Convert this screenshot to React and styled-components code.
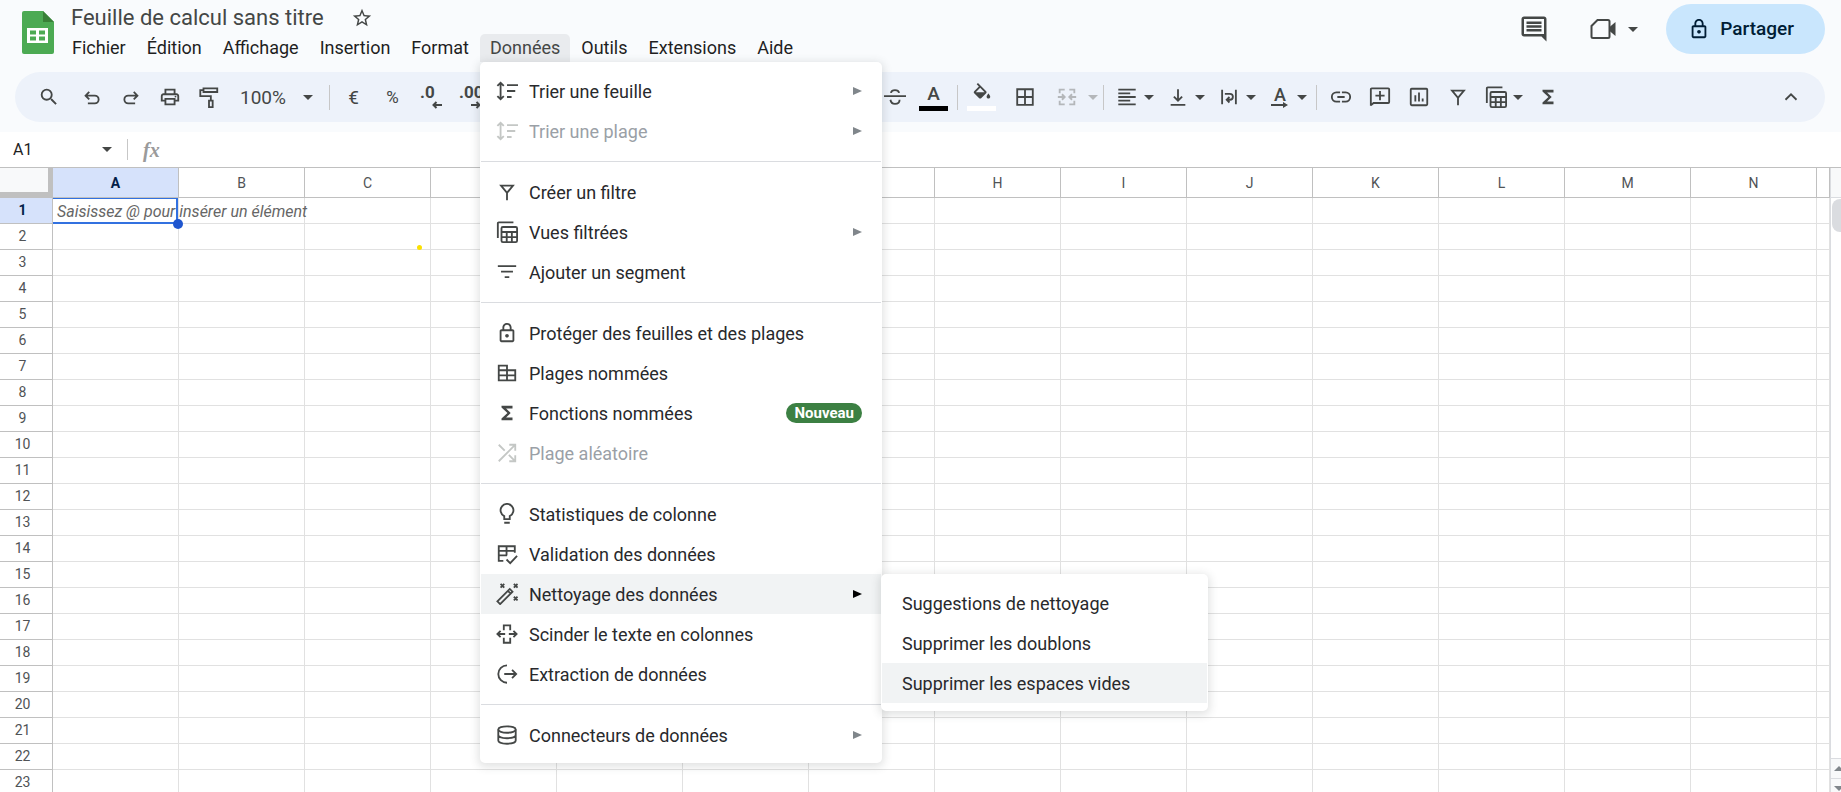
import React from 'react'
import styled, { createGlobalStyle, css } from 'styled-components'

const COLUMNS = 'ABCDEFGHIJKLMN'.split('')
const ROWS = Array.from({ length: 23 }, (_, i) => i + 1)

/* icons */

const Svg = ({ size = 24, children }) => (
    <svg width={ size } height={ size } viewBox="0 0 24 24" fill="currentColor" aria-hidden="true">
        { children }
    </svg>
)

const Stroke = ({ size = 24, width = 2, children }) => (
    <svg
        width={ size }
        height={ size }
        viewBox="0 0 24 24"
        fill="none"
        stroke="currentColor"
        strokeWidth={ width }
        aria-hidden="true"
    >
        { children }
    </svg>
)

const SheetsLogo = () => (
    <svg width="32" height="43" viewBox="0 0 32 43" aria-hidden="true">
        <path fill="#4caa53" d="M2 0h19l11 11v30a2 2 0 0 1-2 2H2a2 2 0 0 1-2-2V2a2 2 0 0 1 2-2z" />
        <path fill="#398038" d="M21 0l11 11H21z" />
        <path
            fill="#fff"
            fillRule="evenodd"
            d="M5 17h21v15H5zM8 19.500v4h6v-4zM17 19.500v4h6v-4zM8 25.500v4h6v-4zM17 25.500v4h6v-4z"
        />
    </svg>
)

const StarIcon = () => (
    <Svg size={ 22 }>
        <path d="M22 9.240l-7.190-.62L12 2 9.190 8.630 2 9.240l5.460 4.730L5.820 21 12 17.270 18.180 21l-1.630-7.030L22 9.240zM12 15.400l-3.760 2.270 1-4.280-3.320-2.880 4.380-.38L12 6.100l1.710 4.040 4.380.38-3.320 2.880 1 4.280L12 15.400z" />
    </Svg>
)

const CommentIcon = () => (
    <Svg size={ 30 }>
        <path d="M21.990 4c0-1.100-.89-2-1.990-2H4c-1.100 0-2 .9-2 2v12c0 1.100.9 2 2 2h14l4 4-.01-18zM20 4v12H4V4h16zM6 12h12v2H6zm0-3h12v2H6zm0-3h12v2H6z" />
    </Svg>
)

const MeetIcon = () => (
    <svg width="26" height="22" viewBox="0 0 26 22" aria-hidden="true">
        <path fill="none" stroke="currentColor" strokeWidth="2" d="M7.500 2H18a1.500 1.500 0 0 1 1.500 1.500v15A1.500 1.500 0 0 1 18 20H3a1.500 1.500 0 0 1-1.500-1.500V8z" />
        <path fill="currentColor" d="M19 9.500L25.500 4v14L19 12.500z" />
    </svg>
)

const LockIcon = ({ size = 24 }) => (
    <Svg size={ size }>
        <path d="M18 8h-1V6c0-2.760-2.240-5-5-5S7 3.240 7 6v2H6c-1.100 0-2 .9-2 2v10c0 1.100.9 2 2 2h12c1.100 0 2-.9 2-2V10c0-1.100-.9-2-2-2zM9 6c0-1.660 1.340-3 3-3s3 1.340 3 3v2H9V6zm9 14H6V10h12v10zm-6-3c1.100 0 2-.9 2-2s-.9-2-2-2-2 .9-2 2 .9 2 2 2z" />
    </Svg>
)

const SearchIcon = () => (
    <Svg>
        <path d="M15.500 14h-.79l-.28-.27A6.471 6.471 0 0 0 16 9.500 6.500 6.500 0 1 0 9.500 16c1.610 0 3.090-.59 4.230-1.570l.27.28v.79l5 4.990L20.490 19l-4.990-5zm-6 0C7.010 14 5 11.990 5 9.500S7.010 5 9.500 5 14 7.010 14 9.500 11.990 14 9.500 14z" />
    </Svg>
)

const UndoIcon = () => (
    <Stroke>
        <path d="M9 6.500L5 10.500l4 4M5.500 10.500H15a4 4 0 0 1 0 8.500H7.500" />
    </Stroke>
)

const RedoIcon = () => (
    <Stroke>
        <path d="M15 6.500l4 4-4 4M18.500 10.500H9A4 4 0 0 0 9 19h7.500" />
    </Stroke>
)

const PrintIcon = () => (
    <Svg>
        <path d="M19 8h-1V3H6v5H5c-1.660 0-3 1.340-3 3v6h4v4h12v-4h4v-6c0-1.660-1.340-3-3-3zM8 5h8v3H8V5zm8 12v2H8v-4h8v2zm2-2v-2H6v2H4v-4c0-.55.45-1 1-1h14c.55 0 1 .45 1 1v4h-2z" />
        <circle cx="18" cy="11.500" r="1" />
    </Svg>
)

const PaintIcon = () => (
    <Stroke>
        <path d="M6 2.500h15v4H6zM6 4.500H2.500V11H14v5M12 16h4v7h-4z" />
    </Stroke>
)

const ArrowLeftSmall = () => (
    <svg width="10" height="8" viewBox="0 0 10 8" aria-hidden="true">
        <path fill="none" stroke="currentColor" strokeWidth="2" d="M10 4H1.500M4.500 1l-3 3 3 3" />
    </svg>
)

const ArrowRightSmall = () => (
    <svg width="10" height="8" viewBox="0 0 10 8" aria-hidden="true">
        <path fill="none" stroke="currentColor" strokeWidth="2" d="M0 4h8.500M5.500 1l3 3-3 3" />
    </svg>
)

const StrikeIcon = () => (
    <Stroke>
        <path d="M0 11h24M7.500 7.500C8 5.500 9.500 4.500 12 4.500s4 1 4.500 3M7 15c.5 3 2 4.500 5 4.500s5-1.500 5-4.500" />
    </Stroke>
)

const FillIcon = () => (
    <svg width="24" height="24" viewBox="0 0 24 24" fill="currentColor" aria-hidden="true">
        <path d="M16.560 8.940L7.620 0 6.210 1.410l2.380 2.380-5.150 5.150a1.490 1.490 0 0 0 0 2.120l5.500 5.500c.29.290.68.440 1.060.44s.77-.15 1.060-.44l5.500-5.500c.59-.58.59-1.530 0-2.120zM5.210 10L10 5.210 14.790 10H5.210zM19 11.500s-2 2.170-2 3.500c0 1.100.9 2 2 2s2-.9 2-2c0-1.330-2-3.500-2-3.500z" />
    </svg>
)

const BordersIcon = () => (
    <Stroke>
        <path d="M3.500 3.500h17v17h-17zM12 3.500v17M3.500 12h17" />
    </Stroke>
)

const MergeIcon = () => (
    <Stroke>
        <path d="M9.500 4H4v4M4 16v4h5.500M14.500 4H20v4M20 16v4h-5.500M2 12h7M6.500 9l3 3-3 3M22 12h-7M17.500 9l-3 3 3 3" />
    </Stroke>
)

const AlignIcon = () => (
    <Stroke>
        <path d="M2.500 4h19M2.500 8h13M2.500 12h19M2.500 16h13M2.500 20h19" />
    </Stroke>
)

const BottomIcon = () => (
    <Stroke>
        <path d="M4 20.500h16M12 3.500v12M7.500 11.500L12 16l4.500-4.500" />
    </Stroke>
)

const WrapIcon = () => (
    <Stroke>
        <path d="M4.500 4v16M19.500 4v16M7.500 8.500h5.500a3.200 3.200 0 0 1 0 6.500H9.500M12.500 12l-3 3 3 3" />
    </Stroke>
)

const LinkIcon = () => (
    <Stroke>
        <path d="M11 7H7a5 5 0 0 0 0 10h4M13 7h4a5 5 0 0 1 0 10h-4M8 12h8" />
    </Stroke>
)

const AddCommentIcon = () => (
    <Stroke>
        <path d="M2 21.500V3.500a1 1 0 0 1 1-1h18a1 1 0 0 1 1 1v14a1 1 0 0 1-1 1H5L2 21M12 5.500v10M7 10.500h10" />
    </Stroke>
)

const ChartIcon = () => (
    <Stroke>
        <rect x="3" y="3" width="18" height="18" rx="1" />
        <path d="M8 10v7M12 7v10M16 13.500V17" />
    </Stroke>
)

const FilterIcon = () => (
    <Stroke>
        <path d="M5.500 5h13L12 13zM12 12.500v8.500" />
    </Stroke>
)

const ViewsIcon = () => (
    <Stroke>
        <path d="M2 18.500V2.500a1 1 0 0 1 1-1h16" />
        <rect x="6" y="6.500" width="17" height="16.500" rx="1.500" />
        <path d="M6 12h17M6 17.500h17M11.700 12v11M17.300 12v11" />
    </Stroke>
)

const SigmaIcon = () => (
    <Svg>
        <path d="M18 4H6v2l6.500 6L6 18v2h12v-3h-7l5-5-5-5h7z" />
    </Svg>
)

const ChevronUpIcon = () => (
    <Stroke>
        <path d="M6 15l6-6 6 6" />
    </Stroke>
)

const BoldIcon = () => (
    <Stroke width={ 3 }>
        <path d="M8 5h5a3 3 0 0 1 0 7H8zM8 12h6a3 3 0 0 1 0 7H8z" />
    </Stroke>
)

const ItalicIcon = () => (
    <Stroke>
        <path d="M10 5h8M6 19h8M14 5l-4 14" />
    </Stroke>
)

const MinusIcon = () => (
    <Stroke>
        <path d="M6 12h12" />
    </Stroke>
)

const PlusIcon = () => (
    <Stroke>
        <path d="M6 12h12M12 6v12" />
    </Stroke>
)

const SortIcon = () => (
    <Stroke>
        <path d="M5 3v18M1.500 6.500L5 3l3.500 3.500M1.500 17.500L5 21l3.500-3.500M12 5.500h12M12 12h9M12 18.500h5" />
    </Stroke>
)

const SegmentIcon = () => (
    <Stroke>
        <path d="M2 5.500h20M5.500 11.500h13M9.500 17.500h5" />
    </Stroke>
)

const NamedRangeIcon = () => (
    <Stroke>
        <path d="M3 4h9v16H3zM12 9h9v11h-9M3 9h9M3 14.500h18" />
    </Stroke>
)

const ShuffleIcon = () => (
    <Stroke>
        <path d="M3 21L20.500 3.500M3 3l6.500 6.500M14 14l6.500 6.500M14.500 3H21v6.500M14.500 21H21v-6.500" />
    </Stroke>
)

const BulbIcon = () => (
    <Stroke>
        <path d="M9 17.500v-3.200a7 7 0 1 1 6 0v3.200zM9 21.500h6" />
    </Stroke>
)

const ValidationIcon = () => (
    <Stroke>
        <path d="M8 19.500H3V3.500h17.500v7M3 8.500h17.500M3 13.500h9M11.500 3.500v10M11.500 18l4 4 7.500-8" />
    </Stroke>
)

const WandIcon = () => (
    <Stroke>
        <path d="M1.500 20L15 6.500l3 3L4.500 23zM13 8.500l3 3M5 1l4 4M9 1L5 5M19.500 1l4 4M23.500 1l-4 4M19.500 15l4 4M23.500 15l-4 4" />
    </Stroke>
)

const SplitIcon = () => (
    <Stroke>
        <path d="M8.500 8V2.500h7V8M8.500 16v5.500h7V16M10 12H1.500M5 8.500L1.500 12 5 15.500M14 12h8.500M19 8.500l3.500 3.500-3.500 3.500" />
    </Stroke>
)

const ExtractIcon = () => (
    <Stroke>
        <path d="M12 2.500a9.500 9.500 0 0 0 0 19M9 12h13M17.500 7.500L22 12l-4.500 4.500" />
    </Stroke>
)

const DatabaseIcon = () => (
    <Stroke>
        <ellipse cx="12" cy="6" rx="9.500" ry="3.500" />
        <path d="M2.500 6v12c0 2 4 3.500 9.500 3.500s9.500-1.500 9.500-3.500V6M2.500 12c0 2 4 3.500 9.500 3.500s9.500-1.500 9.500-3.500" />
    </Stroke>
)

const Caret = () => (
    <svg width="10" height="5" viewBox="0 0 10 5" fill="currentColor" aria-hidden="true">
        <path d="M0 0h10L5 5z" />
    </svg>
)

const SubmenuArrow = () => (
    <svg width="9" height="8" viewBox="0 0 9 8" fill="currentColor" aria-hidden="true">
        <path d="M0 0l9 4-9 4z" />
    </svg>
)

/* data */

const MENUS = ['Fichier', 'Édition', 'Affichage', 'Insertion', 'Format', 'Données', 'Outils', 'Extensions', 'Aide']

const DATA_MENU = [
    [
        { label: 'Trier une feuille', icon: <SortIcon />, arrow: true },
        { label: 'Trier une plage', icon: <SortIcon />, arrow: true, disabled: true },
    ],
    [
        { label: 'Créer un filtre', icon: <FilterIcon /> },
        { label: 'Vues filtrées', icon: <ViewsIcon />, arrow: true },
        { label: 'Ajouter un segment', icon: <SegmentIcon /> },
    ],
    [
        { label: 'Protéger des feuilles et des plages', icon: <LockIcon /> },
        { label: 'Plages nommées', icon: <NamedRangeIcon /> },
        { label: 'Fonctions nommées', icon: <SigmaIcon />, badge: 'Nouveau' },
        { label: 'Plage aléatoire', icon: <ShuffleIcon />, disabled: true },
    ],
    [
        { label: 'Statistiques de colonne', icon: <BulbIcon /> },
        { label: 'Validation des données', icon: <ValidationIcon /> },
        {
            label: 'Nettoyage des données',
            icon: <WandIcon />,
            arrow: true,
            items: ['Suggestions de nettoyage', 'Supprimer les doublons', 'Supprimer les espaces vides'],
        },
        { label: 'Scinder le texte en colonnes', icon: <SplitIcon /> },
        { label: 'Extraction de données', icon: <ExtractIcon /> },
    ],
    [
        { label: 'Connecteurs de données', icon: <DatabaseIcon />, arrow: true },
    ],
]

/* components */

const DataMenu = () => (
    <Menu>
        { DATA_MENU.map((group, i) => (
            <MenuGroup key={ i }>
                { group.map(({ label, icon, arrow, badge, disabled, items }) => (
                    <MenuRow key={ label }>
                        <MenuItem disabled={ disabled } $active={ !!items }>
                            <MenuIcon>{ icon }</MenuIcon>
                            <MenuLabel>{ label }</MenuLabel>
                            { badge && <Badge>{ badge }</Badge> }
                            { arrow && <MenuArrow $active={ !!items }><SubmenuArrow /></MenuArrow> }
                        </MenuItem>
                        { items && (
                            <Submenu>
                                { items.map(item => (
                                    <SubmenuItem key={ item } $active={ item === 'Supprimer les espaces vides' }>
                                        { item }
                                    </SubmenuItem>
                                )) }
                            </Submenu>
                        ) }
                    </MenuRow>
                )) }
            </MenuGroup>
        )) }
    </Menu>
)

const Tool = ({ label, children, ...props }) => (
    <ToolButton aria-label={ label } { ...props }>{ children }</ToolButton>
)

const ComboTool = ({ label, children, ...props }) => (
    <ComboButton aria-label={ label } { ...props }>
        { children }
        <Caret />
    </ComboButton>
)

const SheetToolbar = () => (
    <Toolbar>
        <ToolGroup>
            <Tool label="Rechercher"><SearchIcon /></Tool>
        </ToolGroup>
        <ToolGroup>
            <Tool label="Annuler"><UndoIcon /></Tool>
            <Tool label="Rétablir"><RedoIcon /></Tool>
            <Tool label="Imprimer"><PrintIcon /></Tool>
            <Tool label="Copier la mise en forme"><PaintIcon /></Tool>
            <ZoomButton>100% <Caret /></ZoomButton>
        </ToolGroup>
        <Divider />
        <Tool label="Format monétaire">€</Tool>
        <Tool label="Format en pourcentage"><Percent>%</Percent></Tool>
        <DecimalButton>.0<ArrowLeftSmall /></DecimalButton>
        <DecimalButton>.00<ArrowRightSmall /></DecimalButton>
        <ComboTool label="Autres formats"><MinusIcon /></ComboTool>
        <Divider />
        <FontButton aria-label="Police"><Caret /></FontButton>
        <Divider />
        <Tool label="Réduire la taille"><MinusIcon /></Tool>
        <Tool label="Taille de la police"><Caret /></Tool>
        <Tool label="Augmenter la taille"><PlusIcon /></Tool>
        <Divider />
        <Tool label="Gras"><BoldIcon /></Tool>
        <Tool label="Italique"><ItalicIcon /></Tool>
        <Tool label="Barré"><StrikeIcon /></Tool>
        <ColorButton aria-label="Couleur du texte"><ColorLetter>A</ColorLetter><Swatch $color="#000" /></ColorButton>
        <Divider />
        <ToolGroup>
            <ColorButton aria-label="Couleur de remplissage"><FillIcon /><Swatch $color="#fff" /></ColorButton>
        </ToolGroup>
        <ToolGroup>
            <Tool label="Bordures"><BordersIcon /></Tool>
        </ToolGroup>
        <ComboTool label="Fusionner les cellules" disabled $gap={ 10 }><MergeIcon /></ComboTool>
        <Divider />
        <ComboTool label="Alignement horizontal"><AlignIcon /></ComboTool>
        <ComboTool label="Alignement vertical"><BottomIcon /></ComboTool>
        <ComboTool label="Retour à la ligne"><WrapIcon /></ComboTool>
        <ComboTool label="Rotation du texte">
            <RotateGlyph>A<svg width="18" height="6" viewBox="0 0 18 6" aria-hidden="true">
                <path fill="currentColor" d="M0 2h12V0l5 3-5 3V4H0z" />
            </svg></RotateGlyph>
        </ComboTool>
        <Divider />
        <Tool label="Insérer un lien"><LinkIcon /></Tool>
        <Tool label="Insérer un commentaire"><AddCommentIcon /></Tool>
        <Tool label="Insérer un graphique"><ChartIcon /></Tool>
        <Tool label="Créer un filtre"><FilterIcon /></Tool>
        <ComboTool label="Vues filtrées"><ViewsIcon /></ComboTool>
        <Tool label="Fonctions"><SigmaIcon /></Tool>
        <CollapseButton aria-label="Masquer les menus"><ChevronUpIcon /></CollapseButton>
    </Toolbar>
)

const Grid = () => (
    <Table>
        <colgroup>
            <RowHeadCol />
            { COLUMNS.map(c => <DataCol key={ c } />) }
            <col />
        </colgroup>
        <thead>
            <tr>
                <Corner />
                { COLUMNS.map(c => <ColumnHead key={ c } $selected={ c === 'A' }>{ c }</ColumnHead>) }
                <ColumnHead />
            </tr>
        </thead>
        <tbody>
            { ROWS.map(r => (
                <tr key={ r }>
                    <RowHead $selected={ r === 1 }>{ r }</RowHead>
                    { COLUMNS.map(c => (
                        <Cell key={ c }>
                            { r === 1 && c === 'A' && (
                                <ActiveCell>
                                    Saisissez @ pour insérer un élément
                                    <FillHandle />
                                </ActiveCell>
                            ) }
                            { r === 2 && c === 'C' && <Marker /> }
                        </Cell>
                    )) }
                    <Cell />
                </tr>
            )) }
        </tbody>
    </Table>
)

const App = () => (
    <Page>
        <GlobalStyle />
        <Header>
            <TitleBar>
                <SheetsLogo />
                <TitleColumn>
                    <TitleRow>
                        <Title>Feuille de calcul sans titre</Title>
                        <IconButton aria-label="Ajouter aux favoris"><StarIcon /></IconButton>
                    </TitleRow>
                    <MenuBar>
                        { MENUS.map(name => (
                            <MenuBarItem key={ name }>
                                <MenuBarButton $open={ name === 'Données' }>{ name }</MenuBarButton>
                                { name === 'Données' && <DataMenu /> }
                            </MenuBarItem>
                        )) }
                    </MenuBar>
                </TitleColumn>
                <Actions>
                    <IconButton aria-label="Commentaires"><CommentIcon /></IconButton>
                    <MeetButton aria-label="Appel vidéo"><MeetIcon /><Caret /></MeetButton>
                    <ShareButton><LockIcon size={ 22 } />Partager</ShareButton>
                </Actions>
            </TitleBar>
            <SheetToolbar />
        </Header>
        <FormulaBar>
            <NameBox aria-label="Zone de nom" defaultValue="A1" />
            <IconButton aria-label="Plages nommées"><Caret /></IconButton>
            <FormulaDivider />
            <Fx>fx</Fx>
            <FormulaInput aria-label="Barre de formule" />
        </FormulaBar>
        <Sheet>
            <GridArea><Grid /></GridArea>
            <Scrollbar>
                <ScrollTop />
                <Thumb />
                <ScrollButtons>
                    <ScrollButton aria-label="Défiler vers le haut"><UpTriangle><Caret /></UpTriangle></ScrollButton>
                    <ScrollButton aria-label="Défiler vers le bas"><Caret /></ScrollButton>
                </ScrollButtons>
            </Scrollbar>
        </Sheet>
    </Page>
)

export default App

/* styles */

const GlobalStyle = createGlobalStyle`
    *, *::before, *::after {
        box-sizing: border-box;
    }

    body {
        margin: 0;
        background: #fff;
        color: #444746;
        font-family: Roboto, "Liberation Sans", sans-serif;
    }

    button, input {
        margin: 0;
        padding: 0;
        border: 0;
        background: none;
        color: inherit;
        font: inherit;
    }

    svg {
        display: block;
        flex: none;
    }
`

const Page = styled.div`
    display: flex;
    flex-direction: column;
    height: 100vh;
    overflow: hidden;
`

const Header = styled.header`
    flex: none;
    padding: 4px 16px 10px 15px;
    background: #f9fbfd;
`

const TitleBar = styled.div`
    display: flex;
    align-items: flex-start;
    margin-bottom: 10px;

    > svg {
        margin: 7px 0 0 7px;
    }
`

const TitleColumn = styled.div`
    flex: 1;
    padding-left: 8px;
`

const TitleRow = styled.div`
    display: flex;
    align-items: center;
    gap: 27px;
    height: 30px;
    padding-bottom: 2px;
`

const Title = styled.h1`
    margin: 0 0 0 9px;
    font-size: 22px;
    font-weight: 400;
    line-height: 28px;
`

const IconButton = styled.button`
    display: flex;
    align-items: center;
`

const MenuBar = styled.nav`
    display: flex;
    gap: 1px;
`

const MenuBarItem = styled.div`
    position: relative;
`

const MenuBarButton = styled.button`
    height: 28px;
    padding: 0 10px;
    border-radius: 5px 5px 0 0;
    color: ${p => (p.$open ? '#444746' : '#1f1f1f')};
    background: ${p => (p.$open ? '#e9ebee' : 'transparent')};
    font-size: 18px;
    line-height: 28px;
`

const popup = css`
    position: absolute;
    z-index: 2;
    padding: 9px 1px 8px;
    border-radius: 5px;
    background: #fff;
    box-shadow: 0 2px 8px 2px rgba(60, 64, 67, .15);
`

const Menu = styled.div`
    ${popup}
    top: 100%;
    left: 0;
    width: 402px;
`

const MenuGroup = styled.div`
    & + & {
        margin-top: 10px;
        padding-top: 10px;
        border-top: 1px solid #dadce0;
    }
`

const MenuRow = styled.div`
    position: relative;
`

const MenuItem = styled.button`
    display: flex;
    align-items: center;
    width: 100%;
    height: 40px;
    padding: 0 19px 0 15px;
    background: ${p => (p.$active ? '#f1f3f4' : 'transparent')};
    color: #28292c;
    font-size: 18px;
    text-align: left;

    &:disabled {
        color: #9aa0a6;
    }
`

const MenuIcon = styled.span`
    width: 22px;
    margin-right: 11px;
    color: #444746;

    svg {
        width: 22px;
        height: 22px;
    }

    ${MenuItem}:disabled & {
        color: #c4c7c5;
    }
`

const MenuLabel = styled.span`
    flex: 1;
`

const MenuArrow = styled.span`
    color: ${p => (p.$active ? '#000' : '#80868b')};
`

const Badge = styled.span`
    padding: 0 8px;
    border-radius: 10px;
    background: #3c8043;
    color: #fff;
    font-size: 15px;
    font-weight: 700;
    line-height: 20px;
`

const Submenu = styled.div`
    ${popup}
    top: 0;
    left: 100%;
    width: 327px;
`

const SubmenuItem = styled.button`
    display: block;
    width: 100%;
    height: 40px;
    padding: 0 20px;
    background: ${p => (p.$active ? '#f1f3f4' : 'transparent')};
    color: #28292c;
    font-size: 18px;
    text-align: left;
`

const Actions = styled.div`
    display: flex;
    align-items: center;
    height: 50px;
`

const MeetButton = styled.button`
    display: flex;
    align-items: center;
    gap: 12px;
    margin: 0 28px 0 41px;
`

const ShareButton = styled.button`
    display: flex;
    align-items: center;
    gap: 10px;
    height: 50px;
    padding: 0 31px 0 22px;
    border-radius: 25px;
    background: #c9e6fd;
    color: #001d35;
    font-size: 19px;
    font-weight: 500;
    line-height: 22px;
`

const Toolbar = styled.div`
    display: flex;
    align-items: center;
    height: 50px;
    padding: 0 15px 0 14px;
    border-radius: 25px;
    background: #edf2fa;
    overflow: hidden;
`

const ToolGroup = styled.div`
    display: flex;
    flex: none;
    margin-right: 4px;

    &:has(+ span) {
        margin-right: 0;
    }
`

const ToolButton = styled.button`
    display: flex;
    flex: none;
    align-items: center;
    justify-content: center;
    width: 39px;
    height: 38px;
    font-size: 19px;

    > svg {
        width: 22px;
        height: 22px;
    }

    > svg[width="10"] {
        width: 10px;
        height: 5px;
    }
`

const Percent = styled.span`
    font-size: 17px;
`

const ComboButton = styled.button`
    display: flex;
    flex: none;
    align-items: center;
    gap: ${p => p.$gap || 6}px;
    width: 51px;
    height: 38px;
    padding-left: 8px;

    > svg:first-child {
        width: 22px;
        height: 22px;
    }

    &:disabled {
        color: #b4b7ba;
    }
`

const ZoomButton = styled.button`
    display: flex;
    align-items: center;
    justify-content: space-between;
    width: 97px;
    height: 38px;
    padding: 0 12px;
    font-size: 19px;
`

const DecimalButton = styled.button`
    display: flex;
    flex: none;
    flex-direction: column;
    align-items: flex-start;
    width: 39px;
    height: 38px;
    padding: 6px 0 0 8px;
    font-size: 17px;
    font-weight: 700;
    line-height: 17px;

    svg {
        margin-left: 12px;
    }
`

const FontButton = styled.button`
    display: flex;
    flex: none;
    align-items: center;
    justify-content: flex-end;
    width: 112px;
    height: 38px;
`

const ColorButton = styled.button`
    display: flex;
    flex: none;
    flex-direction: column;
    align-items: center;
    justify-content: space-between;
    width: 39px;
    height: 28px;

    svg {
        width: 22px;
        height: 22px;
    }
`

const ColorLetter = styled.span`
    font-size: 19px;
    font-weight: 500;
    line-height: 22px;
`

const Swatch = styled.span`
    flex: none;
    width: 29px;
    height: 5px;
    background: ${p => p.$color};
`

const RotateGlyph = styled.span`
    display: flex;
    flex-direction: column;
    align-items: center;
    width: 22px;
    font-size: 18px;
    font-weight: 500;
    line-height: 15px;
`

const Divider = styled.span`
    flex: none;
    width: 1px;
    height: 25px;
    margin: 0 4px;
    background: #c7c7c7;
`

const CollapseButton = styled(ToolButton)`
    margin-left: auto;
`

const FormulaBar = styled.div`
    display: flex;
    flex: none;
    align-items: center;
    height: 35px;
    padding-left: 13px;
`

const NameBox = styled.input`
    width: 89px;
    color: #1f1f1f;
    font-size: 16px;
    outline: 0;
`

const FormulaDivider = styled.span`
    width: 1px;
    height: 21px;
    margin: 0 15px;
    background: #c7c7c7;
`

const Fx = styled.span`
    color: #9a9a9a;
    font-family: "Liberation Serif", serif;
    font-size: 20px;
    font-style: italic;
    font-weight: 700;
    line-height: 24px;
`

const FormulaInput = styled.input`
    flex: 1;
    margin-left: 12px;
    font-size: 16px;
    outline: 0;
`

const Sheet = styled.main`
    display: flex;
    flex: 1;
    min-height: 0;
    border-top: 1px solid #c0c0c0;
`

const GridArea = styled.div`
    flex: 1;
    min-width: 0;
    overflow: hidden;
`

const Table = styled.table`
    width: 100%;
    border-spacing: 0;
    table-layout: fixed;
`

const RowHeadCol = styled.col`
    width: 53px;
`

const DataCol = styled.col`
    width: 126px;
`

const headCell = css`
    padding: 0;
    border-right: 1px solid #c0c0c0;
    border-bottom: 1px solid #c0c0c0;
    background: ${p => (p.$selected ? '#d6e2fb' : '#fff')};
    color: ${p => (p.$selected ? '#041e49' : '#505356')};
    font-size: 14px;
    font-weight: ${p => (p.$selected ? 700 : 400)};
    text-align: center;
`

const ColumnHead = styled.th`
    ${headCell}
    height: 30px;
`

const Corner = styled.td`
    height: 30px;
    padding: 0;
    border-right: 5px solid #c0c0c0;
    border-bottom: 6px solid #c0c0c0;
    background: #f8f9fa;
`

const RowHead = styled.th`
    ${headCell}
    height: 26px;
    padding: 0 7px 2px 0;
`

const Cell = styled.td`
    position: relative;
    height: 26px;
    padding: 0;
    border-right: 1px solid #e1e1e1;
    border-bottom: 1px solid #e1e1e1;
`

/* overlaps the neighbouring gridlines, and its text runs over the next column */
const ActiveCell = styled.div`
    position: absolute;
    z-index: 1;
    inset: 0 0 -1px 0;
    padding: 2px 0 0 4px;
    border: solid #3271e0;
    border-width: 1px 2px 2px 0;
    color: #666;
    font-size: 16px;
    font-style: italic;
    line-height: 22px;
    white-space: nowrap;
`

const FillHandle = styled.span`
    position: absolute;
    right: -7px;
    bottom: -7px;
    width: 10px;
    height: 10px;
    border-radius: 50%;
    background: #1f56cf;
`

const Marker = styled.span`
    position: absolute;
    right: 8px;
    bottom: -1px;
    width: 5px;
    height: 5px;
    border-radius: 50%;
    background: #fbe000;
`

const Scrollbar = styled.div`
    display: flex;
    flex: none;
    flex-direction: column;
    width: 11px;
    border-left: 1px solid #dadce0;
    overflow: hidden;
`

const ScrollTop = styled.div`
    flex: none;
    height: 30px;
    border-bottom: 1px solid #dadce0;
    background: #f8f9fa;
`

const Thumb = styled.div`
    width: 18px;
    height: 33px;
    margin: 1px 0 0 1px;
    border-radius: 8px;
    background: #dadce0;
`

const ScrollButtons = styled.div`
    margin: auto 0 -6px;
`

const ScrollButton = styled.button`
    display: flex;
    align-items: center;
    justify-content: flex-end;
    width: 14px;
    height: 20px;
    padding-right: 1px;
    border-top: 1px solid #dadce0;
    background: #f8f9fa;
    color: #80868b;
`

const UpTriangle = styled.span`
    transform: rotate(180deg);
`
